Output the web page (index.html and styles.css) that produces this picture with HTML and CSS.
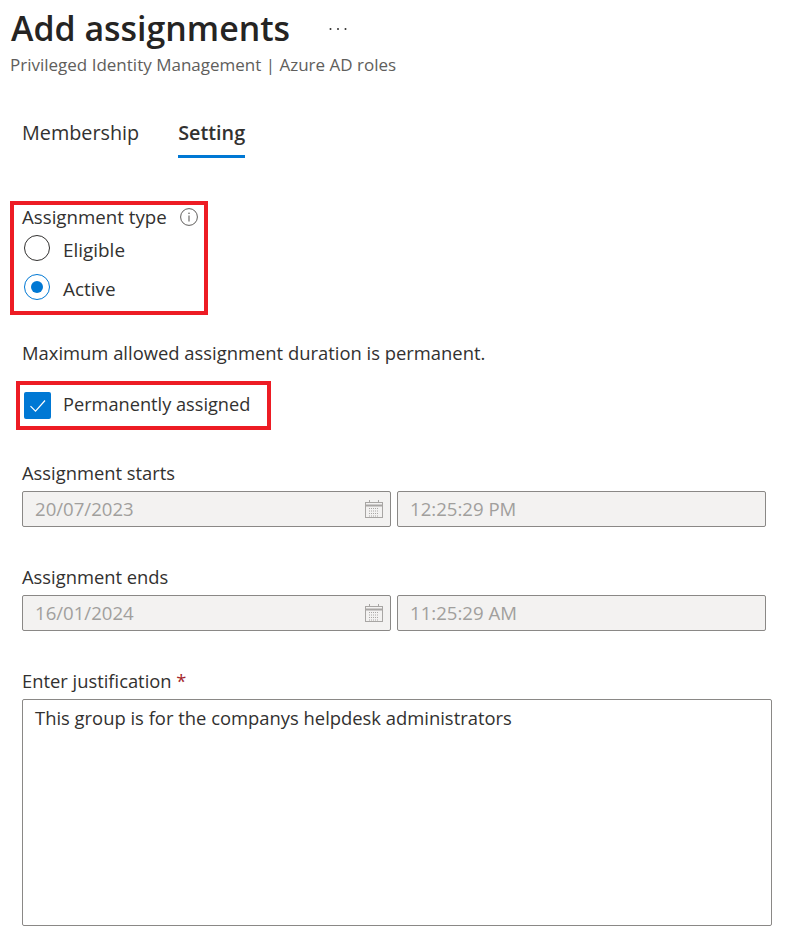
FILE: index.html
```html
<!DOCTYPE html>
<html lang="en">
<head>
<meta charset="utf-8">
<title>Add assignments</title>
<link rel="stylesheet" href="styles.css">
</head>
<body>
<header class="header">
  <div class="title-row">
    <h1 class="title">Add assignments</h1>
    <svg class="more" viewBox="0 0 18 4" width="18" height="4"><circle cx="1.500" cy="2" r="1" fill="#323130"/><circle cx="9" cy="2" r="1" fill="#323130"/><circle cx="16.500" cy="2" r="1" fill="#323130"/></svg>
  </div>
  <p class="subtitle">Privileged Identity Management | Azure AD roles</p>
</header>
<nav class="tabs">
  <span class="tab">Membership</span>
  <span class="tab tab-active">Setting</span>
</nav>
<section class="mark mark-type">
  <div class="label-row">
    <span>Assignment type</span>
    <svg class="info" viewBox="0 0 18 18" width="18" height="18"><circle cx="9" cy="9" r="8.400" fill="none" stroke="#605e5c" stroke-width="1"/><path d="M9 7.600v6" stroke="#605e5c" stroke-width="1.100" fill="none"/><circle cx="9" cy="5.200" r=".8" fill="#605e5c"/></svg>
  </div>
  <div class="radio-row"><span class="radio"></span><span>Eligible</span></div>
  <div class="radio-row"><span class="radio radio-on"></span><span>Active</span></div>
</section>
<p class="note">Maximum allowed assignment duration is permanent.</p>
<section class="mark mark-perm">
  <span class="check"><svg viewBox="0 0 27 27" width="27" height="27"><path d="M6.500 14.200l5 5L21 8.500" fill="none" stroke="#fff" stroke-width="1.200"/></svg></span>
  <span class="perm-text">Permanently assigned</span>
</section>
<div class="field field-starts">
  <div class="field-label">Assignment starts</div>
  <div class="inputs">
    <div class="input input-date"><span>20/07/2023</span>
      <svg class="cal" viewBox="0 0 20 20" width="20" height="20"><use href="#cal"/></svg></div>
    <div class="input input-time">12:25:29 PM</div>
  </div>
</div>
<div class="field field-ends">
  <div class="field-label">Assignment ends</div>
  <div class="inputs">
    <div class="input input-date"><span>16/01/2024</span>
      <svg class="cal" viewBox="0 0 20 20" width="20" height="20"><use href="#cal"/></svg></div>
    <div class="input input-time">11:25:29 AM</div>
  </div>
</div>
<div class="field field-just">
  <div class="field-label">Enter justification <span class="req">*</span></div>
  <div class="textarea">This group is for the companys helpdesk administrators</div>
</div>
<svg class="defs" width="0" height="0"><defs>
  <g id="cal" fill="none" stroke="#a8a6a4" stroke-width="1">
    <rect x="1.500" y="3.500" width="17" height="15"/>
    <path d="M1.500 6.500h17" stroke-width="2"/>
    <path d="M5.500 1v3M14.500 1v3"/>
    <path d="M5 9.500h10M5 12h10M5 14.500h10M5 17h10" stroke-dasharray="1 1"/>
  </g>
</defs></svg>
</body>
</html>
```
FILE: styles.css
```css
* { box-sizing: border-box; }
html, body { margin: 0; padding: 0; }
body {
  width: 804px;
  height: 946px;
  overflow: hidden;
  background: #fff;
  color: #323130;
  font-family: "Open Sans", "Noto Sans", "Liberation Sans", sans-serif;
  font-size: 18.400px;
  line-height: 24px;
}
.header { padding: 9px 0 0 10px; }
.title-row { display: flex; align-items: center; height: 40px; padding-left: 1px; }
.title { margin: 0; font-size: 33.900px; line-height: 40px; font-weight: 600; color: #252423; position: relative; top: -1px; }
.more { margin-left: 39px; flex: none; }
.subtitle { margin: 5px 0 0; font-size: 17px; line-height: 22px; color: #605e5c; }
.tabs { display: flex; gap: 39px; margin: 44px 0 0 22px; height: 38px; }
.tab { height: 38px; line-height: 25px; font-size: 19.800px; }
.tab-active { font-weight: 600; border-bottom: 3px solid #0078d4; }
.mark { border: 4px solid #ed1c24; }
.mark-type { width: 198px; height: 114px; margin: 43px 0 0 10px; padding: 0 0 0 8px; }
.label-row { display: flex; align-items: center; gap: 13px; height: 25px; padding-bottom: 1px; font-size: 18.700px; }
.info { flex: none; }
.radio-row { display: flex; align-items: center; gap: 13px; height: 39px; padding-left: 2px; font-size: 18.900px; }
.radio { flex: none; width: 26px; height: 26px; border-radius: 50%; border: 1px solid #323130; background: #fff; position: relative; top: -2px; }
.radio-on { border-color: #0078d4; }
.radio-on::after { content: ""; position: absolute; left: 6px; top: 6px; width: 12px; height: 12px; border-radius: 50%; background: #0078d4; }
.note { margin: 26px 0 0 22px; line-height: 24px; }
.mark-perm { display: flex; align-items: center; gap: 12px; width: 255px; height: 49px; margin: 16px 0 0 16px; padding: 0 0 1px 4px; }
.perm-text { font-size: 18.200px; position: relative; top: -1px; }
.check { flex: none; width: 27px; height: 27px; border-radius: 2px; background: #0078d4; display: flex; }
.field { margin-left: 22px; }
.field-starts { margin-top: 31px; }
.field-ends { margin-top: 38px; }
.field-just { margin-top: 38px; }
.field-label { height: 24px; line-height: 24px; font-size: 18.350px; }
.inputs { display: flex; gap: 6px; margin-top: 6px; }
.input { height: 36px; border: 1px solid #8a8886; border-radius: 2px; background: #f3f2f1; color: #a19f9d; line-height: 34px; padding-left: 12px; font-size: 18.600px; }
.input-date { width: 369px; display: flex; align-items: center; justify-content: space-between; padding-right: 6px; }
.input-time { width: 369px; }
.cal { flex: none; }
.req { color: #a4262c; }
.textarea { width: 750px; height: 227px; margin-top: 6px; border: 1px solid #8a8886; border-radius: 2px; padding: 6px 12px; }
.defs { position: absolute; }
```
